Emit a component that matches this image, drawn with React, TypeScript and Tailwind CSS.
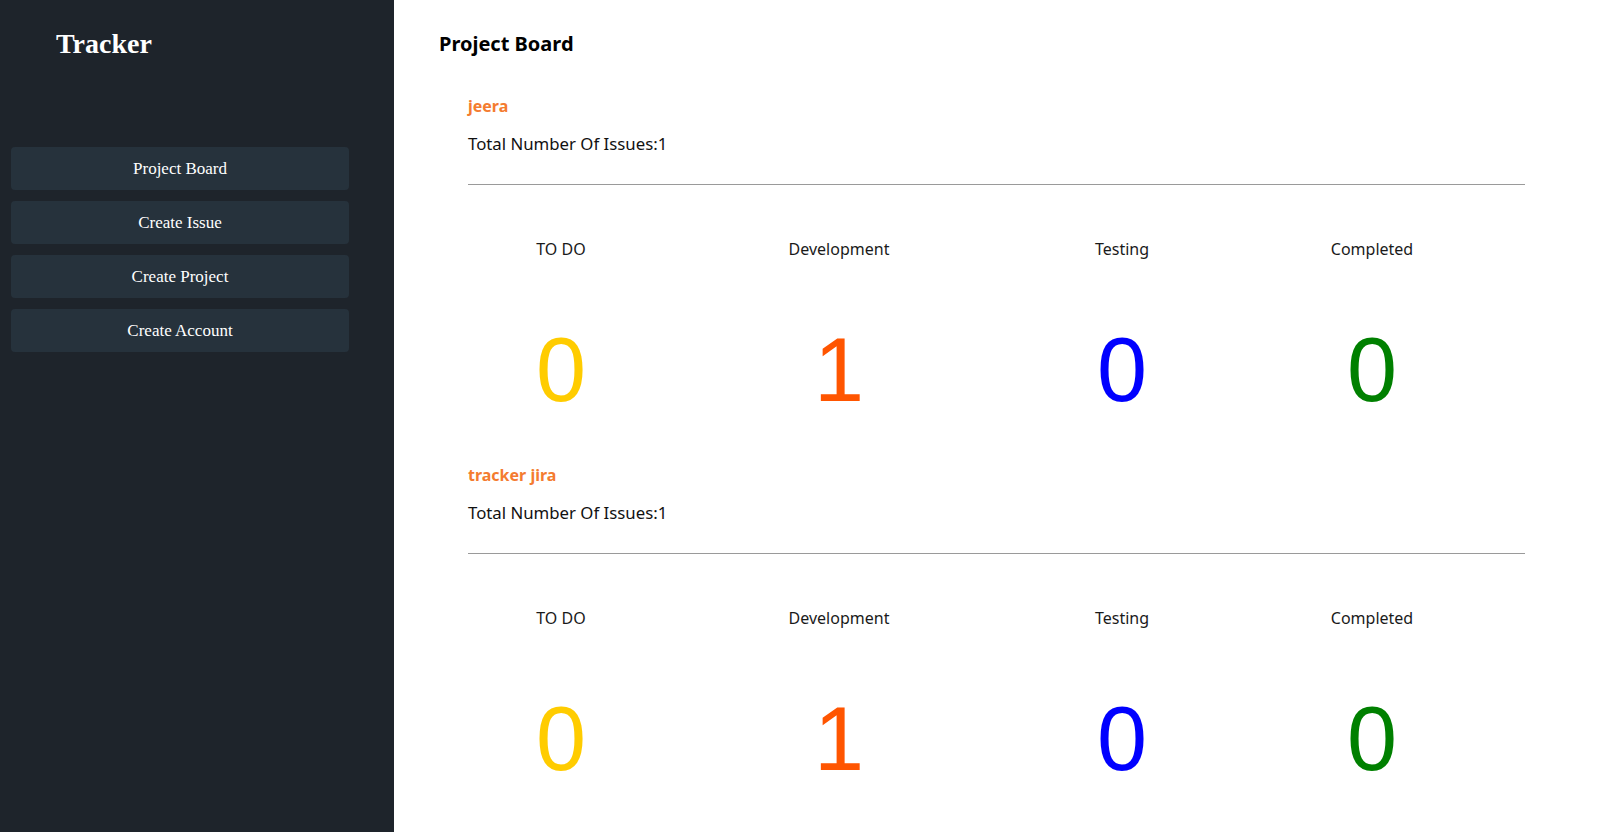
import React from "react";

const projects = [
  { name: "jeera", total: 1, counts: [0, 1, 0, 0] },
  { name: "tracker jira", total: 1, counts: [0, 1, 0, 0] },
];

const labels = ["TO DO", "Development", "Testing", "Completed"];
const colors = ["text-[#ffcc00]", "text-[#ff5500]", "text-[#0000ff]", "text-[#008000]"];

function ProjectBlock({ name, total, counts }: { name: string; total: number; counts: number[] }) {
  return (
    <div className="ml-[29px] w-[1057px]">
      <div className="h-[24px] text-[16px] leading-[24px] font-bold text-[#f47b2f]">{name}</div>
      <div className="mt-[14px] h-[24px] text-[16.8px] leading-[24px] text-[#111]">Total Number Of Issues:{total}</div>
      <div className="mt-[28px] h-px bg-[#9a9a9a]" />
      <div className="mt-[52px] grid grid-cols-[186px_370px_196px_304px] text-center">
        {labels.map((l) => (
          <div key={l} className="h-[24px] text-[16px] leading-[24px] text-[#1a1a1a]">{l}</div>
        ))}
      </div>
      <div className="mt-[64px] grid grid-cols-[186px_370px_196px_304px] text-center">
        {counts.map((c, i) => (
          <div
            key={i}
            className={`h-[90px] text-[90px] leading-[90px] ${colors[i]}`}
            style={{ fontFamily: '"Liberation Sans", Arial, sans-serif' }}
          >
            {c}
          </div>
        ))}
      </div>
    </div>
  );
}

export default function App() {
  return (
    <div className="flex min-h-[832px] w-full bg-white" style={{ fontFamily: '"Noto Sans", sans-serif' }}>
      <aside className="w-[394px] shrink-0 bg-[#1e242b] pl-[11px] pr-[45px] pt-[28px]" style={{ fontFamily: '"Liberation Serif", serif' }}>
        <h1 className="ml-[45px] h-[32px] text-[28px] leading-[32px] font-bold text-white">Tracker</h1>
        <nav className="mt-[87px] flex flex-col gap-[11px]">
          {["Project Board", "Create Issue", "Create Project", "Create Account"].map((t) => (
            <button
              key={t}
              className="h-[43px] w-full rounded-[4px] bg-[#26323c] text-[17px] text-white"
            >
              {t}
            </button>
          ))}
        </nav>
      </aside>
      <main className="flex-1 pl-[45px] pt-[30px]">
        <h2 className="h-[28px] text-[20px] leading-[28px] font-bold text-black">Project Board</h2>
        <div className="mt-[36px]">
          <ProjectBlock {...projects[0]} />
        </div>
        <div className="mt-[48px]">
          <ProjectBlock {...projects[1]} />
        </div>
      </main>
    </div>
  );
}
